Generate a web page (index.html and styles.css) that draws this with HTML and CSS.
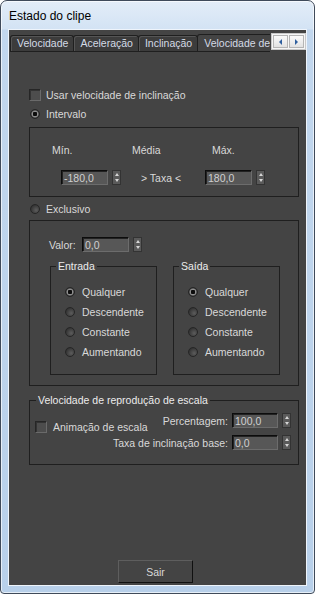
FILE: index.html
```html
<!DOCTYPE html>
<html>
  <head>
    <meta charset="UTF-8" />
    <title>Estado do clipe</title>
    <link rel="stylesheet" href="styles.css">
  </head>
  <body>
    <div class="window">
      <div class="titlebar">Estado do clipe</div>

      <div class="client">
        <div class="tabbar">
          <div class="tab-strip">
            <div class="tab">Velocidade</div>
            <div class="tab">Aceleração</div>
            <div class="tab">Inclinação</div>
            <div class="tab active">Velocidade de inclinação</div>
          </div>
          <div class="tab-scroll">
            <span class="scroll-btn"><i class="tri-left"></i></span>
            <span class="scroll-btn"><i class="tri-right"></i></span>
          </div>
        </div>

        <div class="panel">
          <label class="check-row first-row">
            <span class="checkbox"></span>
            Usar velocidade de inclinação
          </label>

          <label class="radio-row intervalo">
            <span class="radio on"></span>
            Intervalo
          </label>

          <div class="box range-box">
            <div class="range-labels">
              <span>Mín.</span>
              <span>Média</span>
              <span>Máx.</span>
            </div>
            <div class="range-inputs">
              <span class="edit">-180,0</span>
              <span class="spinner"><i class="up"></i><i class="down"></i></span>
              <span class="rate">&gt; Taxa &lt;</span>
              <span class="edit">180,0</span>
              <span class="spinner"><i class="up"></i><i class="down"></i></span>
            </div>
          </div>

          <label class="radio-row exclusivo">
            <span class="radio"></span>
            Exclusivo
          </label>

          <div class="box exclusive-box">
            <div class="value-row">
              <span class="value-label">Valor:</span>
              <span class="edit">0,0</span>
              <span class="spinner"><i class="up"></i><i class="down"></i></span>
            </div>

            <div class="groups">
              <fieldset class="group">
                <legend>Entrada</legend>
                <label class="radio-row"><span class="radio on"></span>Qualquer</label>
                <label class="radio-row"><span class="radio"></span>Descendente</label>
                <label class="radio-row"><span class="radio"></span>Constante</label>
                <label class="radio-row"><span class="radio"></span>Aumentando</label>
              </fieldset>
              <fieldset class="group">
                <legend>Saída</legend>
                <label class="radio-row"><span class="radio on"></span>Qualquer</label>
                <label class="radio-row"><span class="radio"></span>Descendente</label>
                <label class="radio-row"><span class="radio"></span>Constante</label>
                <label class="radio-row"><span class="radio"></span>Aumentando</label>
              </fieldset>
            </div>
          </div>

          <fieldset class="box scale-box">
            <legend>Velocidade de reprodução de escala</legend>
            <div class="scale-body">
              <label class="check-row scale-check">
                <span class="checkbox"></span>
                Animação de escala
              </label>
              <div class="scale-fields">
                <div class="field-row">
                  <span>Percentagem:</span>
                  <span class="edit">100,0</span>
                  <span class="spinner"><i class="up"></i><i class="down"></i></span>
                </div>
                <div class="field-row">
                  <span>Taxa de inclinação base:</span>
                  <span class="edit">0,0</span>
                  <span class="spinner"><i class="up"></i><i class="down"></i></span>
                </div>
              </div>
            </div>
          </fieldset>
        </div>

        <div class="footer">
          <button class="exit-button">Sair</button>
        </div>
      </div>
    </div>
  </body>
</html>
```

FILE: styles.css
```css
:root {
  --client: #444444;
  --text: #d9d9d9;
  --line: #1f1f1f;
  --edit-bg: #575757;
}

* {
  margin: 0;
  padding: 0;
  box-sizing: border-box;
}

body {
  width: 315px;
  height: 594px;
  background: #ffffff;
  font-family: 'Liberation Sans', Arial, sans-serif;
  font-size: 10.5px;
  color: var(--text);
  overflow: hidden;
}

.window {
  width: 315px;
  height: 594px;
  display: flex;
  flex-direction: column;
  border: 1px solid #3f4a5a;
  border-radius: 7px 7px 4px 4px;
  background: linear-gradient(180deg, #e3edf8 0px, #d3e3f4 28px, #c2d7ee 29px, #b8d0ea 100%);
  box-shadow: inset 0 0 0 1px rgba(255, 255, 255, 0.65);
}

.titlebar {
  height: 28px;
  padding: 8px 0 0 8px;
  font-size: 12px;
  color: #000000;
}

.client {
  flex: 1;
  margin: 0 7px 7px 7px;
  background: var(--client);
  border: 1px solid #eef4fb;
  display: flex;
  flex-direction: column;
}

/* tabs */

.tabbar {
  display: flex;
  align-items: flex-end;
  height: 22px;
  padding: 3px 0 0 1px;
}

.tab-strip {
  display: flex;
  align-items: flex-end;
  width: 263px;
  height: 18px;
  overflow: hidden;
  border-bottom: 1px solid var(--line);
}

.tab {
  flex: none;
  height: 16px;
  padding: 1px 5px 0 6px;
  background: #3c3c3c;
  border: 1px solid var(--line);
  border-bottom: none;
  border-radius: 3px 3px 0 0;
  box-shadow: inset 1px 1px 0 #555555;
  color: #d4dbe6;
  white-space: nowrap;
}

.tab + .tab {
  margin-left: -1px;
}

.tab.active {
  height: 18px;
  margin-bottom: -1px;
  padding-top: 2px;
  background: var(--client);
  box-shadow: none;
}

.tab-scroll {
  display: flex;
  align-self: flex-start;
  height: 17px;
  margin-left: 1px;
  padding: 1px;
  background: #f6f6f6;
  border: 1px solid #c9c9c9;
}

.scroll-btn {
  width: 15px;
  height: 13px;
  display: flex;
  align-items: center;
  justify-content: center;
  background: linear-gradient(180deg, #fbfbfb, #e2e2e2);
  border: 1px solid #b5b5b5;
}

.scroll-btn + .scroll-btn {
  margin-left: 1px;
}

.tri-left,
.tri-right {
  width: 0;
  height: 0;
  border-top: 3px solid transparent;
  border-bottom: 3px solid transparent;
}

.tri-left {
  border-right: 3px solid #2f5f9e;
}

.tri-right {
  border-left: 3px solid #2f5f9e;
}

/* panel */

.panel {
  flex: 1;
  padding: 0 7px 0 20px;
}

.check-row,
.radio-row {
  display: flex;
  align-items: center;
  height: 14px;
  white-space: nowrap;
}

.first-row {
  margin-top: 36px;
}

.checkbox {
  flex: none;
  width: 12px;
  height: 12px;
  margin-right: 5px;
  background: #4d4d4d;
  border: 1px solid;
  border-color: #262626 #6a6a6a #6a6a6a #262626;
  box-shadow: inset 1px 1px 0 #333333;
}

.radio {
  flex: none;
  width: 10px;
  height: 10px;
  margin-right: 6px;
  border-radius: 50%;
  border: 1px solid #262626;
  background: radial-gradient(circle at 65% 65%, #5c5c5c 0, #3e3e3e 4px, #2e2e2e 6px);
}

.radio.on {
  background: radial-gradient(circle, #0d0d0d 0, #0d0d0d 2px, #9a9a9a 2.6px, #7a7a7a 3.2px, #3a3a3a 4px);
}

.intervalo {
  margin-top: 5px;
  padding-left: 1px;
}

.box {
  border: 1px solid var(--line);
}

.range-box {
  margin-top: 6px;
  height: 70px;
  padding: 15px 0 0 22px;
}

.range-labels {
  display: flex;
  height: 14px;
  align-items: center;
}

.range-labels span {
  width: 80px;
}

.range-inputs {
  display: flex;
  align-items: center;
  height: 15px;
  margin-top: 13px;
  padding-left: 9px;
}

.edit {
  flex: none;
  display: flex;
  align-items: center;
  width: 47px;
  height: 15px;
  padding-left: 2px;
  background: var(--edit-bg);
  border: 1px solid;
  border-color: #0c0c0c #6c6c6c #6c6c6c #0c0c0c;
  box-shadow: inset 1px 1px 0 #222222;
  color: #d0d0d0;
}

.spinner {
  flex: none;
  display: flex;
  flex-direction: column;
  justify-content: space-around;
  align-items: center;
  width: 9px;
  height: 15px;
  margin-left: 4px;
  background: #5a5a5a;
  border: 1px solid #333333;
}

.spinner .up,
.spinner .down {
  width: 0;
  height: 0;
  border-left: 2.5px solid transparent;
  border-right: 2.5px solid transparent;
}

.spinner .up {
  border-bottom: 3px solid #d6d6d6;
}

.spinner .down {
  border-top: 3px solid #d6d6d6;
}

.rate {
  flex: none;
  width: 64px;
  margin-left: 20px;
  white-space: nowrap;
}

.exclusivo {
  margin-top: 5px;
  padding-left: 1px;
}

.exclusive-box {
  margin-top: 4px;
  height: 166px;
  padding: 16px 0 0 19px;
}

.value-row {
  display: flex;
  align-items: center;
  height: 15px;
}

.value-label {
  width: 33px;
}

.groups {
  display: flex;
  gap: 16px;
  margin-top: 7px;
  margin-left: 1px;
}

.group {
  width: 107px;
  height: 116px;
  min-width: 0;
  border: 1px solid var(--line);
  padding: 12px 0 0 0;
  display: flex;
  flex-direction: column;
  gap: 6px;
}

.group legend,
.scale-box legend {
  margin-left: 5px;
  padding: 0 2px;
  line-height: 14px;
  color: #ececec;
}

.group .radio-row {
  margin-left: 14px;
}

.group .radio {
  margin-right: 7px;
}

.scale-box {
  margin-top: 7px;
  height: 72px;
  min-width: 0;
  padding: 0;
}

.scale-box legend {
  margin-left: 6px;
}

.scale-body {
  display: grid;
  grid-template-columns: 1fr;
  padding: 0 7px 0 5px;
}

.scale-check,
.scale-fields {
  grid-area: 1 / 1;
}

.scale-check {
  justify-self: start;
  margin-top: 13px;
}

.scale-check .checkbox {
  margin-right: 6px;
}

.scale-fields {
  justify-self: end;
  margin-top: 6px;
  display: flex;
  flex-direction: column;
  gap: 7px;
}

.field-row {
  display: flex;
  align-items: center;
  justify-content: flex-end;
  height: 15px;
}

.field-row span:first-child {
  margin-right: 4px;
  white-space: nowrap;
}

.field-row .edit {
  width: 46px;
}

/* footer */

.footer {
  padding: 0 0 2px 109px;
}

.exit-button {
  width: 75px;
  height: 23px;
  background: var(--client);
  border: 1px solid;
  border-color: #5e5e5e #101010 #101010 #5e5e5e;
  color: #d9d9d9;
  font-family: 'Liberation Sans', Arial, sans-serif;
  font-size: 10.5px;
}
```
